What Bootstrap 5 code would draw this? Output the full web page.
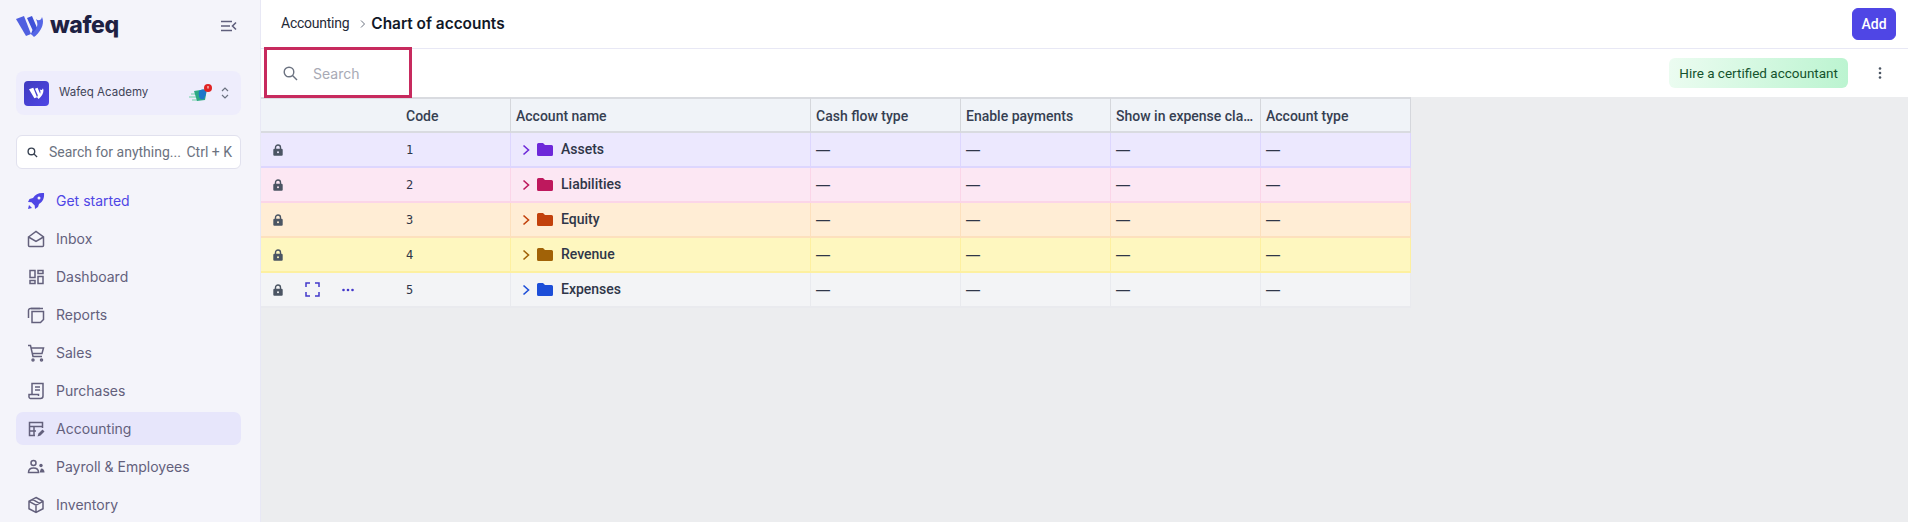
<!DOCTYPE html>
<html lang="en">
<head>
<meta charset="utf-8">
<title>Chart of accounts</title>
<link href="https://cdn.jsdelivr.net/npm/bootstrap@5.3.0/dist/css/bootstrap.min.css" rel="stylesheet">
<style>
html,body{height:100%;overflow:hidden}
body{font-family:Inter,"Liberation Sans",sans-serif;background:#ecedef;color:#1f2937}
.shell{height:522px;width:1908px}
.side{width:260px;flex:none;background:#f4f4fa;padding:0 19px 0 16px;overflow:hidden}
.brandrow{height:52px;margin-bottom:19px}
.brandtxt{font-family:Inter,sans-serif;font-weight:800;font-size:23px;letter-spacing:-.4px;color:#1e2142;line-height:1;margin-left:6px;position:relative;top:-1px}
.orgbox{height:44px;background:#eeedfc;border-radius:8px;padding:0 8px;font-size:11.5px;color:#3f4458}
.orgtile{width:25px;height:25px;border-radius:4px;background:linear-gradient(135deg,#3f3bbf,#4f46e5);margin-right:10px}
.findbox{height:34px;margin-top:20px;background:#fff;border:1px solid #e1e1ee;border-radius:6px;padding:0 8px 0 10px;font-family:Roboto,sans-serif;font-size:14px;color:#6b7280;margin-bottom:15px}
.findbox svg{flex:none}
.findbox span.hint{flex:1;margin-left:11px;white-space:nowrap}
.mitem{height:33px;margin-bottom:5px;padding-left:11px;border-radius:7px;font-size:14px;color:#63607c;text-decoration:none}
.mitem svg{width:18px;height:18px;margin-right:11px;flex:none}
.mitem.now{background:#e7e6fb}
.mitem.start{color:#4f46e5}
.mainp{flex:1;min-width:0;border-left:1px solid #e8e8f5}
.topbar{height:49px;background:#fff;border-bottom:1px solid #e8e8f5;padding:0 12px 0 20px}
.crumb{font-family:Roboto,sans-serif;font-size:14px;letter-spacing:-.25px;color:#1f2937;position:relative;top:-1px}
.sepc{margin:0 2px 0 8px;width:12px;height:12px}
.pagehead{font-size:15.4px;font-weight:600;color:#111827;margin:0}
.addbtn{--bs-btn-bg:#4f46e5;--bs-btn-border-color:#4f46e5;--bs-btn-hover-bg:#4f46e5;--bs-btn-hover-border-color:#4f46e5;--bs-btn-padding-x:0;--bs-btn-padding-y:0;--bs-btn-font-size:14px;--bs-btn-font-weight:500;--bs-btn-border-radius:6px;font-family:Roboto,sans-serif;width:44px;height:32px}
.toolrow{height:48px;background:#fff;padding-right:18px}
.qbox{width:148px;height:51px;margin:-2px 0 -1px 3px;border:3px solid #c72a5e;padding:1px 0 0 16px;font-size:14px;color:#a8aab5;background:#fff;position:relative;z-index:2}
.qbox svg{margin-right:15px}
.hirebtn{height:30px;padding:0 10px;border-radius:6px;background:linear-gradient(100deg,#ecfcf1,#bbf4d0);color:#14532d;font-family:Roboto,sans-serif;font-size:13.5px;margin-right:30px;white-space:nowrap}
.grid-t{table-layout:fixed;width:1150px;margin:0;border-collapse:separate;border-spacing:0;font-size:14px;--bs-table-bg:transparent}
.grid-t th,.grid-t td{padding:0 5px;height:35px;vertical-align:middle;border:0;box-shadow:none;color:#2f3648}
.grid-t th{background:#f0f3f8;font-family:Roboto,sans-serif;font-weight:500;font-size:14px;padding-top:2px;border-top:2px solid #d9dbe0;border-bottom:2px solid #d9dbe0;border-right:1px solid #d5d7dc;height:36px;color:#363f52}
.grid-t th:first-child{border-right:0}
.grid-t td{border-right:1px solid var(--rb);border-bottom:2px solid var(--rb);background:var(--rc)}
.grid-t td:first-child{border-right:0}
.rowA{--rc:#ece8fe;--rb:#ddd6fe;--ic:#6d28d9}
.rowB{--rc:#fce7f3;--rb:#fbd5e8;--ic:#be185d}
.rowC{--rc:#ffedd5;--rb:#fde0bd;--ic:#c2410c}
.rowD{--rc:#fef7bf;--rb:#fdf0a0;--ic:#a16207}
.rowE{--rc:#f3f4f6;--rb:#e9eaee;--ic:#1d4ed8}
.grid-t td.codecell{font-family:"DejaVu Sans Mono",monospace;font-size:12px;line-height:1}
.grid-t td.acct{font-family:Roboto,sans-serif;font-weight:500;font-size:14px}
.acct svg{vertical-align:-2px;color:var(--ic)}
.acct svg.chev{margin:0 7px 0 6px}
.acct svg.fold{margin-right:8px}
.lockcell{padding-left:12px!important}
.lockcell svg{display:block}
.acts{gap:22px}
</style>
</head>
<body>
<svg width="0" height="0" class="position-absolute">
  <symbol id="lk" viewBox="0 0 10 12"><path d="M2.500 5.500V3.500a2.500 2.500 0 0 1 5 0v2" fill="none" stroke="#4b5563" stroke-width="1.400"/><rect x=".3" y="4.800" width="9.400" height="7" rx="1.100" fill="#4b5563"/><circle cx="5" cy="8.300" r="1" fill="var(--rc)"/></symbol>
  <symbol id="ch" viewBox="0 0 8 12"><path d="M1.500 1.500 6.500 6l-5 4.500" fill="none" stroke="currentColor" stroke-width="1.600"/></symbol>
  <symbol id="fd" viewBox="0 0 16 13"><path d="M0 1.500A1.500 1.500 0 0 1 1.500 0h4.500l2 2h6.500A1.500 1.500 0 0 1 16 3.500v8a1.500 1.500 0 0 1-1.500 1.500h-13A1.500 1.500 0 0 1 0 11.500z" fill="currentColor"/></symbol>
</svg>
<div class="shell d-flex">
  <aside class="side">
    <div class="brandrow d-flex align-items-center justify-content-between">
      <div class="d-flex align-items-center">
        <svg width="28" height="22" viewBox="0 0 28 22"><path d="M0 4 8 1l7 18-5 2z" fill="#4f5fe0"/><path d="M11 3l5-2 6 14-3 6-4-2 1.500-4z" fill="#3f51d8"/><path d="M20 4c2 2 5 2 6-2 3 6-1 15-8 20l-3-3c6-4 8-9 5-15z" fill="#5566e6"/></svg>
        <span class="brandtxt">wafeq</span>
      </div>
      <svg width="16" height="12" viewBox="0 0 16 12" class="me-1" fill="none" stroke="#5f5f7c" stroke-width="1.6"><path d="M0 1.500h11M0 6h9M0 10.500h11M15 2.500 11.500 6l3.500 3.500"/></svg>
    </div>
    <div class="orgbox d-flex align-items-center">
      <div class="orgtile d-flex align-items-center justify-content-center"><svg width="15" height="12" viewBox="0 0 28 22"><path d="M0 4 8 1l7 18-5 2zM11 3l5-2 6 14-3 6-4-2 1.500-4zM20 4c2 2 5 2 6-2 3 6-1 15-8 20l-3-3c6-4 8-9 5-15z" fill="#fff"/></svg></div>
      <span class="flex-grow-1">Wafeq Academy</span>
      <svg width="24" height="20" viewBox="0 0 24 20" class="me-2"><path d="M2 11h6M0 14h8M3 17h6" stroke="#6fd1a5" stroke-width="1.200"/><path d="M5 8l13-2-2 11-8 1z" fill="#2eaa83"/><path d="M10 8c5-3 8-1 7 3l-2 5c-3 1-6 0-5-8z" fill="#1d76c9"/><circle cx="19" cy="5" r="4" fill="#e02424"/><path d="M19 3v2.500" stroke="#fff" stroke-width="1"/></svg>
      <svg width="8" height="14" viewBox="0 0 8 14" class="me-1" fill="none" stroke="#6b7280" stroke-width="1.200"><path d="M1 5l3-3 3 3M1 9l3 3 3-3"/></svg>
    </div>
    <div class="findbox d-flex align-items-center">
      <svg width="11" height="11" viewBox="0 0 12 12" fill="none" stroke="#374151" stroke-width="1.500"><circle cx="4.800" cy="4.800" r="3.600"/><path d="M7.500 7.500 11 11"/></svg>
      <span class="hint">Search for anything...</span><span class="text-nowrap">Ctrl + K</span>
    </div>
    <a class="mitem start d-flex align-items-center"><svg viewBox="0 0 18 18" fill="#4f46e5"><path d="M17 1c-5-.5-8.500 1-11 5L2.500 7 1 10l3.500.3 3.200 3.200L8 17l3-2 1-3c4-2.500 5.500-6 5-11z"/><circle cx="12" cy="6" r="1.500" fill="#f4f4fa"/><path d="M1 17l1-4 3 3z"/></svg>Get started</a>
    <a class="mitem d-flex align-items-center"><svg viewBox="0 0 18 18" fill="none" stroke="#63607c" stroke-width="1.500"><path d="M1.500 7 9 1.500 16.500 7v8.500a1 1 0 0 1-1 1h-13a1 1 0 0 1-1-1z"/><path d="M1.500 7 9 11.500 16.500 7"/></svg>Inbox</a>
    <a class="mitem d-flex align-items-center"><svg viewBox="0 0 18 18" fill="none" stroke="#63607c" stroke-width="1.500"><path d="M3 2.500h5v7H3zM3 12.500h5v3H3zM11 2.500h5v3h-5zM11 8.500h5v7h-5z"/></svg>Dashboard</a>
    <a class="mitem d-flex align-items-center"><svg viewBox="0 0 18 18" fill="none" stroke="#63607c" stroke-width="1.500"><path d="M5 5.500h11.500v8l-3 3H5z"/><path d="M13 2.500H3.500a2 2 0 0 0-2 2V12"/><path d="M16 2.500H4"/></svg>Reports</a>
    <a class="mitem d-flex align-items-center"><svg viewBox="0 0 18 18" fill="none" stroke="#63607c" stroke-width="1.500"><path d="M1 1.500h2.500l2.500 11h9M4.500 4h12l-1.500 5.500H6"/><circle cx="6" cy="16" r="1"/><circle cx="14.500" cy="16" r="1"/></svg>Sales</a>
    <a class="mitem d-flex align-items-center"><svg viewBox="0 0 18 18" fill="none" stroke="#63607c" stroke-width="1.500"><path d="M5 12V1.500h11V14a2.500 2.500 0 0 1-2.500 2.500h-10A2 2 0 0 1 2 14v-1.500h9.500V14"/><path d="M8 5h5M8 8h5"/></svg>Purchases</a>
    <a class="mitem now d-flex align-items-center"><svg viewBox="0 0 18 18" fill="none" stroke="#63607c" stroke-width="1.500"><path d="M8 15.500H2.500v-13h13V8M2.500 6.500h13M2.500 11H9M7 6.500v9"/><path d="M10.500 16.500l1-3 4-4 2 2-4 4z" fill="#63607c" stroke="none"/></svg>Accounting</a>
    <a class="mitem d-flex align-items-center"><svg viewBox="0 0 18 18" fill="none" stroke="#63607c" stroke-width="1.500"><circle cx="6.500" cy="5" r="2.500"/><path d="M1.500 14.500c0-3 2-4.500 5-4.500s5 1.500 5 4.500z"/><circle cx="14" cy="7.500" r="1.700" fill="#63607c" stroke="none"/><path d="M12.500 14.500h5c0-2-1-4-3.500-4z" fill="#63607c" stroke="none"/></svg>Payroll &amp; Employees</a>
    <a class="mitem d-flex align-items-center"><svg viewBox="0 0 18 18" fill="none" stroke="#63607c" stroke-width="1.500"><path d="M9 1.500l7 3.800v7.400l-7 3.800-7-3.800V5.300zM2 5.300l7 3.900 7-3.900M9 9.200v7.300M5.500 3.400l7 3.900"/></svg>Inventory</a>
  </aside>
  <main class="mainp">
    <div class="topbar d-flex align-items-center">
      <span class="crumb">Accounting</span>
      <svg class="sepc" viewBox="0 0 12 12" fill="none" stroke="#6b7280" stroke-width="1"><path d="M4 2.500 7.500 6 4 9.500"/></svg>
      <h1 class="pagehead">Chart of accounts</h1>
      <button class="btn btn-primary addbtn ms-auto">Add</button>
    </div>
    <div class="toolrow d-flex align-items-center">
      <div class="qbox d-flex align-items-center">
        <svg width="15" height="15" viewBox="0 0 15 15" fill="none" stroke="#6b7280" stroke-width="1.400"><circle cx="6" cy="6" r="4.800"/><path d="M9.500 9.500 14 14"/></svg>
        <span>Search</span>
      </div>
      <div class="hirebtn d-flex align-items-center ms-auto">Hire a certified accountant</div>
      <svg width="4" height="12" viewBox="0 0 4 12" class="me-2" fill="#4b5563"><circle cx="2" cy="1.500" r="1.300"/><circle cx="2" cy="6" r="1.300"/><circle cx="2" cy="10.500" r="1.300"/></svg>
    </div>
    <table class="table grid-t">
      <colgroup><col style="width:140px"><col style="width:110px"><col style="width:300px"><col style="width:150px"><col style="width:150px"><col style="width:150px"><col style="width:150px"></colgroup>
      <thead><tr><th></th><th>Code</th><th>Account name</th><th>Cash flow type</th><th>Enable payments</th><th class="text-truncate">Show in expense claims</th><th>Account type</th></tr></thead>
      <tbody>
        <tr class="rowA"><td class="lockcell"><svg width="10" height="12"><use href="#lk"/></svg></td><td class="codecell">1</td><td class="acct"><svg class="chev" width="8" height="12"><use href="#ch"/></svg><svg class="fold" width="16" height="13"><use href="#fd"/></svg>Assets</td><td>—</td><td>—</td><td>—</td><td>—</td></tr>
        <tr class="rowB"><td class="lockcell"><svg width="10" height="12"><use href="#lk"/></svg></td><td class="codecell">2</td><td class="acct"><svg class="chev" width="8" height="12"><use href="#ch"/></svg><svg class="fold" width="16" height="13"><use href="#fd"/></svg>Liabilities</td><td>—</td><td>—</td><td>—</td><td>—</td></tr>
        <tr class="rowC"><td class="lockcell"><svg width="10" height="12"><use href="#lk"/></svg></td><td class="codecell">3</td><td class="acct"><svg class="chev" width="8" height="12"><use href="#ch"/></svg><svg class="fold" width="16" height="13"><use href="#fd"/></svg>Equity</td><td>—</td><td>—</td><td>—</td><td>—</td></tr>
        <tr class="rowD"><td class="lockcell"><svg width="10" height="12"><use href="#lk"/></svg></td><td class="codecell">4</td><td class="acct"><svg class="chev" width="8" height="12"><use href="#ch"/></svg><svg class="fold" width="16" height="13"><use href="#fd"/></svg>Revenue</td><td>—</td><td>—</td><td>—</td><td>—</td></tr>
        <tr class="rowE"><td class="lockcell"><div class="d-flex align-items-center acts"><svg width="10" height="12"><use href="#lk"/></svg><svg width="15" height="15" viewBox="0 0 15 15" fill="none" stroke="#4338ca" stroke-width="1.500"><path d="M1 5V1h4M10 1h4v4M14 10v4h-4M5 14H1v-4"/></svg><svg width="12" height="4" viewBox="0 0 12 4" fill="#4338ca"><circle cx="1.500" cy="2" r="1.300"/><circle cx="6" cy="2" r="1.300"/><circle cx="10.500" cy="2" r="1.300"/></svg></div></td><td class="codecell">5</td><td class="acct"><svg class="chev" width="8" height="12"><use href="#ch"/></svg><svg class="fold" width="16" height="13"><use href="#fd"/></svg>Expenses</td><td>—</td><td>—</td><td>—</td><td>—</td></tr>
      </tbody>
    </table>
  </main>
</div>
<script src="https://cdn.jsdelivr.net/npm/bootstrap@5.3.0/dist/js/bootstrap.bundle.min.js"></script>
</body>
</html>
